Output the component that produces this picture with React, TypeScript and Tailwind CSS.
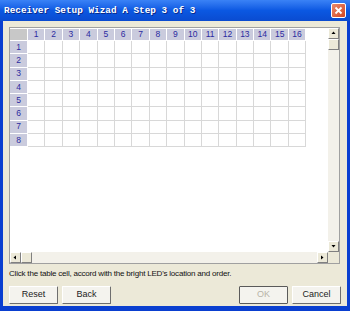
import React from "react";

const cols = Array.from({ length: 16 }, (_, i) => i + 1);
const rows = Array.from({ length: 8 }, (_, i) => i + 1);

function ArrowBtn({ dir }: { dir: "up" | "down" | "left" | "right" }) {
  const tri: Record<string, string> = {
    up: "M1.5 4 L3.5 1.5 L5.5 4 Z",
    down: "M1.5 2 L3.5 4.5 L5.5 2 Z",
    left: "M4 1.5 L1.5 3.5 L4 5.5 Z",
    right: "M2 1.5 L4.5 3.5 L2 5.5 Z",
  };
  return (
    <div className="w-[11px] h-[11px] flex items-center justify-center bg-[#ECE9D8] border border-t-[#fff] border-l-[#fff] border-r-[#808080] border-b-[#808080] shrink-0">
      <svg width="7" height="7" viewBox="0 0 7 7">
        <path d={tri[dir]} fill="#000" />
      </svg>
    </div>
  );
}

function Btn({ label, disabled }: { label: string; disabled?: boolean }) {
  return (
    <div
      className={
        "w-[49px] h-[18px] flex items-center justify-center text-[9px] bg-[#F4F3EE] border rounded-[1px] " +
        (disabled
          ? "border-[#5a5a5a] text-[#b8b4a8]"
          : "border-t-[#fff] border-l-[#fff] border-r-[#6e6e6e] border-b-[#6e6e6e] text-[#222]")
      }
      style={{ fontFamily: '"Liberation Sans", Arial, sans-serif' }}
    >
      {label}
    </div>
  );
}

export default function App() {
  return (
    <div className="w-[350px] h-[311px] bg-[#0A3FD0] flex flex-col overflow-hidden">
      {/* title bar */}
      <div className="h-[21px] flex items-center justify-between pl-[4px] pr-[4px] bg-gradient-to-b from-[#3A82F6] via-[#0B58E2] to-[#0A4BD0]">
        <span
          className="text-white font-bold text-[9.4px] leading-none [text-shadow:1px_1px_0_#0a2a8a]"
          style={{ fontFamily: '"Liberation Mono", "Courier New", monospace' }}
        >
          Receiver Setup Wizad A Step 3 of 3
        </span>
        <div className="w-[15px] h-[15px] rounded-[2px] border border-white bg-gradient-to-br from-[#E98A6C] to-[#D2441E] flex items-center justify-center">
          <svg width="9" height="9" viewBox="0 0 9 9">
            <path d="M1.5 1.5 L7.5 7.5 M7.5 1.5 L1.5 7.5" stroke="#fff" strokeWidth="1.8" />
          </svg>
        </div>
      </div>

      {/* client */}
      <div className="flex-1 mx-[3px] mb-[5px] bg-[#ECE9D8] flex flex-col px-[6px] pt-[6px]">
        {/* list panel */}
        <div className="w-[331px] h-[237px] border border-[#a0a0a0] bg-white flex flex-col">
          <div className="flex flex-1 min-h-0">
            <div className="flex-1 pt-px">
              <div className="grid grid-cols-[18px_repeat(16,17.4px)] grid-rows-[12px_repeat(8,13.25px)]">
                <div className="bg-[#C8C8C8] border-r border-b border-white" />
                {cols.map((c) => (
                  <div
                    key={"h" + c}
                    className="bg-[#CACBDD] border-r border-b border-white flex items-center justify-center text-[8.5px] text-[#2a2aa0]"
                    style={{ fontFamily: '"Liberation Sans", Arial, sans-serif' }}
                  >
                    {c}
                  </div>
                ))}
                {rows.map((r) => (
                  <React.Fragment key={"r" + r}>
                    <div
                      className="bg-[#CACBDD] border-r border-b border-white flex items-center justify-center text-[8.5px] text-[#2a2aa0]"
                      style={{ fontFamily: '"Liberation Sans", Arial, sans-serif' }}
                    >
                      {r}
                    </div>
                    {cols.map((c) => (
                      <div key={r + "-" + c} className="border-r border-b border-[#D8D8D8]" />
                    ))}
                  </React.Fragment>
                ))}
              </div>
            </div>
            {/* vertical scrollbar */}
            <div className="w-[11px] bg-[#F3F1EA] flex flex-col">
              <ArrowBtn dir="up" />
              <div className="w-[11px] h-[11px] bg-[#ECE9D8] border border-t-[#fff] border-l-[#fff] border-r-[#808080] border-b-[#808080]" />
              <div className="flex-1" />
              <ArrowBtn dir="down" />
            </div>
          </div>
          {/* horizontal scrollbar */}
          <div className="h-[11px] flex">
            <div className="flex-1 bg-[#F3F1EA] flex">
              <ArrowBtn dir="left" />
              <div className="w-[11px] h-[11px] bg-[#ECE9D8] border border-t-[#fff] border-l-[#fff] border-r-[#808080] border-b-[#808080]" />
              <div className="flex-1" />
              <ArrowBtn dir="right" />
            </div>
            <div className="w-[11px] bg-[#ECE9D8]" />
          </div>
        </div>

        <div
          className="mt-[4px] text-[8px] leading-[11px] tracking-[-0.2px] text-[#111]"
          style={{ fontFamily: '"Liberation Sans", Arial, sans-serif' }}
        >
          Click the table cell, accord with the bright LED's location and order.
        </div>

        <div className="mt-[7px] flex items-center">
          <div className="flex gap-[4px]">
            <Btn label="Reset" />
            <Btn label="Back" />
          </div>
          <div className="flex-1" />
          <div className="flex gap-[4px]">
            <Btn label="OK" disabled />
            <Btn label="Cancel" />
          </div>
        </div>
      </div>
    </div>
  );
}
